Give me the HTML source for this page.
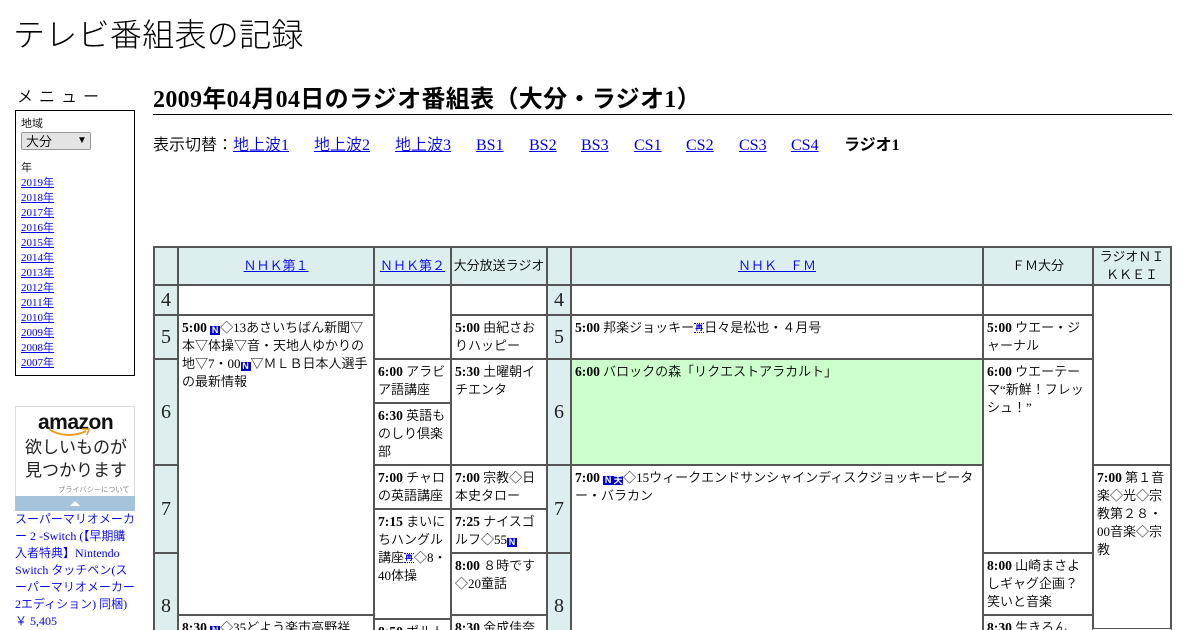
<!DOCTYPE html>
<html lang="ja"><head><meta charset="utf-8"><title>テレビ番組表の記録</title>
<style>
html,body{margin:0;padding:0;background:#fff;width:1200px;height:630px;overflow:hidden}
body{position:relative;font-family:"Liberation Serif","Noto Sans CJK JP",serif;color:#000;font-weight:350}
.a{position:absolute;white-space:nowrap}
a{color:#00e}
.c{position:absolute;box-sizing:border-box;border:1px solid #555;padding:3px 0 0 3px;font-size:13px;line-height:18px;background:#fff;overflow:hidden;white-space:nowrap}
.h{background:#dceeee;text-align:center;font-size:13px;display:flex;align-items:center;justify-content:center;padding:0}
.n{background:#dceeee;text-align:center;font-size:20px;display:flex;align-items:center;justify-content:center;padding:0;color:#222}
b.t{font-weight:bold;font-size:13.6px}
.bd{display:inline-block;width:10px;height:9px;background:#00c;color:#fff;font:bold 9px/9px "Liberation Sans",sans-serif;text-align:center;vertical-align:-.5px}
.re{display:inline-block;width:10px;height:10px;background:#fff;color:#00c;font:bold 8px/8px "Noto Sans CJK JP",sans-serif;text-align:center;border-top:1px dotted #00c;border-bottom:1px dotted #00c;box-sizing:border-box;vertical-align:-.5px;overflow:hidden}
</style></head><body>
<div class="a" style="left:13px;top:15px;font-size:32px;line-height:40px;letter-spacing:.3px;font-weight:300">テレビ番組表の記録</div>
<div class="a" style="left:17px;top:88px;font-size:16px;line-height:20px;letter-spacing:6px">メニュー</div>
<div style="position:absolute;left:15px;top:110px;width:118px;height:264px;border:1px solid #000"></div>
<div class="a" style="left:21px;top:117px;font-size:11px;line-height:15px">地域</div>
<div style="position:absolute;box-sizing:border-box;left:21px;top:132px;width:70px;height:18px;background:#e4e4e4;border:1px solid #999;border-radius:2px;font-size:13px;line-height:17px;padding-left:4px">大分<span style="position:absolute;left:55px;top:0;font-size:10px;line-height:15px">▼</span></div>
<div class="a" style="left:21px;top:161px;font-size:11px;line-height:15px">年</div>
<div class="a" style="left:21px;top:176px;font-size:11px;line-height:15px">
<a href="#">2019年</a><br><a href="#">2018年</a><br><a href="#">2017年</a><br><a href="#">2016年</a><br><a href="#">2015年</a><br><a href="#">2014年</a><br><a href="#">2013年</a><br><a href="#">2012年</a><br><a href="#">2011年</a><br><a href="#">2010年</a><br><a href="#">2009年</a><br><a href="#">2008年</a><br><a href="#">2007年</a></div>

<div style="position:absolute;box-sizing:border-box;left:15px;top:406px;width:120px;height:105px;border:1px solid #ddd;border-bottom:0;background:#fff"></div>
<div class="a" style="left:38px;top:411px;font:bold 21px/24px 'Liberation Sans',sans-serif;letter-spacing:-.5px;color:#111">amazon</div>
<svg style="position:absolute;left:48px;top:427px" width="44" height="12" viewBox="0 0 44 12"><path d="M1 2C10 9 26 10 38 4" fill="none" stroke="#f09a1a" stroke-width="2"/><path d="M34 2L41 2L39 8" fill="none" stroke="#f09a1a" stroke-width="1.5"/></svg>
<div class="a" style="left:25px;top:436px;font-size:17px;line-height:23px;color:#222;font-weight:400">欲しいものが<br>見つかります</div>
<div class="a" style="left:58px;top:485px;font-size:7.2px;line-height:10px;color:#777">プライバシーについて</div>
<div style="position:absolute;left:15px;top:496px;width:120px;height:15px;background:#a5c4dc"></div>
<div style="position:absolute;left:70px;top:501px;width:0;height:0;border-left:5px solid transparent;border-right:5px solid transparent;border-bottom:5px solid #fff"></div>
<div class="a" style="left:15px;top:511px;font-size:12px;line-height:17px;color:#00e">スーパーマリオメーカ<br>ー 2 -Switch (【早期購<br>入者特典】Nintendo<br>Switch タッチペン(ス<br>ーパーマリオメーカー<br>2エディション) 同梱)<br>￥ 5,405</div>

<div class="a" style="left:153px;top:85px;font-size:24px;line-height:30px;font-weight:bold;letter-spacing:.33px">2009年04月04日のラジオ番組表（大分・ラジオ1）</div>
<div style="position:absolute;left:153px;top:114px;width:1019px;height:1px;background:#000"></div>
<div class="a" style="left:153px;top:136px;font-size:16px;line-height:19px">表示切替：</div>
<div class="a" style="left:233px;top:136px;font-size:16px;line-height:19px"><a href="#">地上波1</a></div>
<div class="a" style="left:314px;top:136px;font-size:16px;line-height:19px"><a href="#">地上波2</a></div>
<div class="a" style="left:395px;top:136px;font-size:16px;line-height:19px"><a href="#">地上波3</a></div>
<div class="a" style="left:476px;top:136px;font-size:16px;line-height:19px"><a href="#">BS1</a></div>
<div class="a" style="left:529px;top:136px;font-size:16px;line-height:19px"><a href="#">BS2</a></div>
<div class="a" style="left:581px;top:136px;font-size:16px;line-height:19px"><a href="#">BS3</a></div>
<div class="a" style="left:634px;top:136px;font-size:16px;line-height:19px"><a href="#">CS1</a></div>
<div class="a" style="left:686px;top:136px;font-size:16px;line-height:19px"><a href="#">CS2</a></div>
<div class="a" style="left:739px;top:136px;font-size:16px;line-height:19px"><a href="#">CS3</a></div>
<div class="a" style="left:791px;top:136px;font-size:16px;line-height:19px"><a href="#">CS4</a></div>
<div class="a" style="left:844px;top:136px;font-size:16px;line-height:19px;font-weight:bold">ラジオ1</div>

<div style="position:absolute;left:153px;top:246px;width:1019px;height:384px;border:1px solid #555;border-bottom:0;box-sizing:border-box"></div>

<div class="c h" style="left:154px;top:247px;width:24px;height:38px"></div>
<div class="c h" style="left:178px;top:247px;width:196px;height:38px"><a href="#">ＮＨＫ第１</a></div>
<div class="c h" style="left:374px;top:247px;width:77px;height:38px"><a href="#">ＮＨＫ第２</a></div>
<div class="c h" style="left:451px;top:247px;width:96px;height:38px">大分放送ラジオ</div>
<div class="c h" style="left:547px;top:247px;width:24px;height:38px"></div>
<div class="c h" style="left:571px;top:247px;width:412px;height:38px"><a href="#">ＮＨＫ　ＦＭ</a></div>
<div class="c h" style="left:983px;top:247px;width:110px;height:38px">ＦＭ大分</div>
<div class="c h" style="left:1093px;top:247px;width:78px;height:38px;line-height:18px">ラジオＮＩ<br>ＫＫＥＩ</div>

<div class="c n" style="left:154px;top:285px;width:24px;height:30px">4</div>
<div class="c n" style="left:154px;top:315px;width:24px;height:44px">5</div>
<div class="c n" style="left:154px;top:359px;width:24px;height:106px">6</div>
<div class="c n" style="left:154px;top:465px;width:24px;height:88px">7</div>
<div class="c n" style="left:154px;top:553px;width:24px;height:105px">8</div>
<div class="c n" style="left:547px;top:285px;width:24px;height:30px">4</div>
<div class="c n" style="left:547px;top:315px;width:24px;height:44px">5</div>
<div class="c n" style="left:547px;top:359px;width:24px;height:106px">6</div>
<div class="c n" style="left:547px;top:465px;width:24px;height:88px">7</div>
<div class="c n" style="left:547px;top:553px;width:24px;height:105px">8</div>

<div class="c" style="left:178px;top:285px;width:196px;height:30px"></div>
<div class="c" style="left:178px;top:315px;width:196px;height:300px"><b class="t">5:00</b> <span class="bd">N</span>◇13あさいちばん新聞▽<br>本▽体操▽音・天地人ゆかりの<br>地▽7・00<span class="bd">N</span>▽ＭＬＢ日本人選手<br>の最新情報</div>
<div class="c" style="left:178px;top:615px;width:196px;height:60px"><b class="t">8:30</b> <span class="bd">N</span>◇35どよう楽市高野祥</div>

<div class="c" style="left:374px;top:285px;width:77px;height:74px"></div>
<div class="c" style="left:374px;top:359px;width:77px;height:44px"><b class="t">6:00</b> アラビ<br>ア語講座</div>
<div class="c" style="left:374px;top:403px;width:77px;height:62px"><b class="t">6:30</b> 英語も<br>のしり倶楽<br>部</div>
<div class="c" style="left:374px;top:465px;width:77px;height:44px"><b class="t">7:00</b> チャロ<br>の英語講座</div>
<div class="c" style="left:374px;top:509px;width:77px;height:110px"><b class="t">7:15</b> まいに<br>ちハングル<br>講座<span class="re">再</span>◇8・<br>40体操</div>
<div class="c" style="left:374px;top:619px;width:77px;height:50px"><b class="t">8:50</b> ポルト</div>

<div class="c" style="left:451px;top:285px;width:96px;height:30px"></div>
<div class="c" style="left:451px;top:315px;width:96px;height:44px"><b class="t">5:00</b> 由紀さお<br>りハッピー</div>
<div class="c" style="left:451px;top:359px;width:96px;height:106px"><b class="t">5:30</b> 土曜朝イ<br>チエンタ</div>
<div class="c" style="left:451px;top:465px;width:96px;height:44px"><b class="t">7:00</b> 宗教◇日<br>本史タロー</div>
<div class="c" style="left:451px;top:509px;width:96px;height:44px"><b class="t">7:25</b> ナイスゴ<br>ルフ◇55<span class="bd">N</span></div>
<div class="c" style="left:451px;top:553px;width:96px;height:62px"><b class="t">8:00</b> ８時です<br>◇20童話</div>
<div class="c" style="left:451px;top:615px;width:96px;height:60px"><b class="t">8:30</b> 金成佳奈</div>

<div class="c" style="left:571px;top:285px;width:412px;height:30px"></div>
<div class="c" style="left:571px;top:315px;width:412px;height:44px"><b class="t">5:00</b> 邦楽ジョッキー<span class="re">再</span>日々是松也・４月号</div>
<div class="c" style="left:571px;top:359px;width:412px;height:106px;background:#ccffcc"><b class="t">6:00</b> バロックの森「リクエストアラカルト」</div>
<div class="c" style="left:571px;top:465px;width:412px;height:200px"><b class="t">7:00</b> <span class="bd">N</span><span class="bd">天</span>◇15ウィークエンドサンシャインディスクジョッキーピータ<br>ー・バラカン</div>

<div class="c" style="left:983px;top:285px;width:110px;height:30px"></div>
<div class="c" style="left:983px;top:315px;width:110px;height:44px"><b class="t">5:00</b> ウエー・ジ<br>ャーナル</div>
<div class="c" style="left:983px;top:359px;width:110px;height:194px"><b class="t">6:00</b> ウエーテー<br>マ“新鮮！フレッ<br>シュ！”</div>
<div class="c" style="left:983px;top:553px;width:110px;height:62px"><b class="t">8:00</b> 山崎まさよ<br>しギャグ企画？<br>笑いと音楽</div>
<div class="c" style="left:983px;top:615px;width:110px;height:60px"><b class="t">8:30</b> 生きろん</div>

<div class="c" style="left:1093px;top:285px;width:78px;height:180px"></div>
<div class="c" style="left:1093px;top:465px;width:78px;height:164px"><b class="t">7:00</b> 第１音<br>楽◇光◇宗<br>教第２８・<br>00音楽◇宗<br>教</div>
</body></html>
